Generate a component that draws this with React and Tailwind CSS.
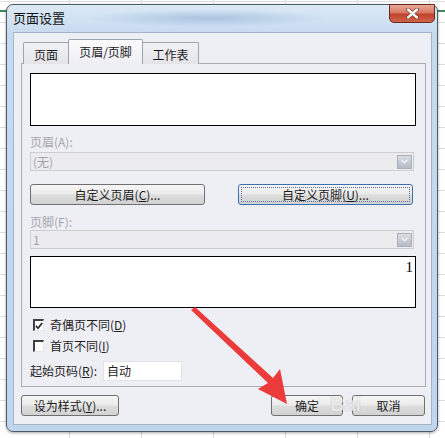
import React from "react";

const cjk = "font-['Microsoft_YaHei','Noto_Sans_CJK_SC',sans-serif]";

function Btn({ children, w, focused }) {
  return (
    <div
      className={`h-[21px] ${w} rounded-[3px] border flex items-center justify-center text-[12px] text-[#1b1b1b] bg-[linear-gradient(to_bottom,#f6f6f6_0%,#ebebeb_48%,#dddddd_52%,#d2d2d2_100%)] ${
        focused ? "border-[#3c6fb0] p-[2px]" : "border-[#707070]"
      }`}
    >
      {focused ? (
        <div className="w-full h-full border border-dotted border-[#5a6f96] flex items-center justify-center">{children}</div>
      ) : (
        children
      )}
    </div>
  );
}

function Combo({ value }) {
  return (
    <div className="h-[19px] w-[384px] border border-[#cdcdd2] bg-[#ececef] flex items-center justify-between pl-[2px] pr-[1px]">
      <span className="text-[12px] text-[#a3a3a8] leading-none">{value}</span>
      <div className="w-[15px] h-[14px] border border-[#a9aeb8] bg-[linear-gradient(to_bottom,#d9dde4,#b5bbc5)] flex items-center justify-center">
        <svg width="7" height="5" viewBox="0 0 7 5">
          <path d="M0.5 0.8 L3.5 3.8 L6.5 0.8" fill="none" stroke="#f4f5f8" strokeWidth="1.4" />
        </svg>
      </div>
    </div>
  );
}

function Check({ checked, children }) {
  return (
    <div className="h-[16px] flex items-center">
      <div className="ml-[3px] w-[11px] h-[12px] bg-white border-t-[2px] border-l-[2px] border-t-[#404040] border-l-[#404040] border-b border-r border-b-[#e6e6e6] border-r-[#e6e6e6] flex items-center justify-center">
        {checked && (
          <svg width="8" height="8" viewBox="0 0 8 8">
            <path d="M0.8 3.8 L3 6.2 L7.2 1" fill="none" stroke="#222" strokeWidth="1.7" />
          </svg>
        )}
      </div>
      <span className="ml-[6px] text-[12px] text-[#1e1e1e]">{children}</span>
    </div>
  );
}

export default function App() {
  return (
    <div
      className={`relative w-[445px] h-[438px] overflow-hidden bg-white ${cjk} bg-[linear-gradient(to_bottom,transparent_10px,#3d8a5c_10px,#3d8a5c_12px,transparent_12px),linear-gradient(to_right,#d9d9d9_1px,transparent_1px),linear-gradient(to_bottom,#dedede_1px,transparent_1px)] bg-[size:100%_100%,72px_21px,72px_21px] bg-[position:0_0,69px_1px,69px_1px] [background-repeat:no-repeat,repeat,repeat]`}
    >
      <div className="pt-[4px] pl-[6px]">
        {/* dialog frame */}
        <div className="w-[432px] h-[428px] rounded-[7px] border border-[#4f5964] bg-[linear-gradient(to_bottom,#dce9f6_0px,#c6daef_30px,#c0d6ee_100%)] flex flex-col shadow-[0_1px_3px_rgba(0,0,0,0.35)]">
          {/* title bar */}
          <div className="h-[27px] flex justify-between items-start rounded-t-[7px] bg-[radial-gradient(ellipse_120px_9px_at_200px_13px,rgba(120,160,200,0.45),transparent)]">
            <span className="pl-[6px] pt-[4px] text-[13px] text-[#111] leading-[18px]">页面设置</span>
            <div className="-mt-px mr-[2px] w-[46px] h-[19px] rounded-b-[5px] border border-[#6a2a22] bg-[linear-gradient(to_bottom,#e9a897_0%,#d67a62_45%,#c2432c_55%,#d0634a_100%)] flex items-center justify-center">
              <svg width="13" height="11" viewBox="0 0 13 11">
                <path d="M2 1.5 L11 9.5 M11 1.5 L2 9.5" stroke="#5a2018" strokeWidth="3.6" strokeLinecap="round" />
                <path d="M2 1.5 L11 9.5 M11 1.5 L2 9.5" stroke="#ffffff" strokeWidth="2.4" strokeLinecap="round" />
              </svg>
            </div>
          </div>

          {/* client area */}
          <div className="ml-[6px] w-[419px] h-[393px] border border-[#a4b4c6] bg-[#eeeef5] flex flex-col">
            {/* tabs */}
            <div className="mt-[7px] ml-[9px] h-[24px] flex items-end -mb-px relative z-10">
              <div className="w-[46px] h-[22px] border border-[#9ea4ad] border-b-0 rounded-t-[2px] bg-[linear-gradient(to_bottom,#f3f3f6,#e3e3e8)] flex items-center justify-center pt-[2px] text-[12px] text-[#1b1b1b]">
                页面
              </div>
              <div className="-ml-px w-[75px] h-[25px] border border-[#9ea4ad] border-b-0 rounded-t-[2px] bg-[linear-gradient(to_bottom,#fbfbfd,#eeeef5)] flex items-start justify-center pt-[3px] text-[12px] text-[#1b1b1b]">
                页眉/页脚
              </div>
              <div className="-ml-px w-[57px] h-[22px] border border-[#9ea4ad] border-b-0 rounded-t-[2px] bg-[linear-gradient(to_bottom,#f3f3f6,#e3e3e8)] flex items-center justify-center pt-[2px] text-[12px] text-[#1b1b1b]">
                工作表
              </div>
            </div>

            {/* tab panel */}
            <div className="ml-[7px] w-[405px] border border-[#a9adb4] bg-[#eeeef5] flex flex-col pl-[8px] pt-[9px] pb-[5px]">
              <div className="h-[53px] w-[386px] border border-black bg-white" />
              <div className="mt-[8px] h-[16px] leading-[16px] text-[12px] text-[#a6a6ab]">页眉(A):</div>
              <div className="mt-[2px]">
                <Combo value="(无)" />
              </div>
              <div className="mt-[13px] flex gap-[33px]">
                <Btn w="w-[175px]">
                  自定义页眉(<u>C</u>)...
                </Btn>
                <Btn w="w-[175px]" focused>
                  自定义页脚(<u>U</u>)...
                </Btn>
              </div>
              <div className="mt-[9px] h-[16px] leading-[16px] text-[12px] text-[#a6a6ab]">页脚(F):</div>
              <Combo value="1" />
              <div className="mt-[7px] h-[52px] w-[386px] border border-black bg-white flex justify-end">
                <span className="pr-[2px] pt-[1px] font-['Liberation_Serif',serif] text-[15px] leading-[18px] text-black">1</span>
              </div>
              <div className="mt-[9px]">
                <Check checked>
                  奇偶页不同(<u>D</u>)
                </Check>
              </div>
              <div className="mt-[5px]">
                <Check>
                  首页不同(<u>I</u>)
                </Check>
              </div>
              <div className="mt-[7px] h-[20px] flex items-center">
                <span className="w-[73px] text-[12px] text-[#1e1e1e]">
                  起始页码(<u>R</u>):
                </span>
                <div className="w-[79px] h-[20px] border border-[#e1e2ea] bg-white flex items-center pl-[3px] text-[12px] text-[#1e1e1e]">
                  自动
                </div>
              </div>
            </div>

            {/* bottom buttons */}
            <div className="mt-[8px] ml-[7px] flex">
              <Btn w="w-[98px]">
                设为样式(<u>Y</u>)...
              </Btn>
              <div className="ml-[152px]">
                <Btn w="w-[72px]">确定</Btn>
              </div>
              <div className="ml-[9px]">
                <Btn w="w-[73px]">取消</Btn>
              </div>
            </div>
          </div>
        </div>
      </div>

      {/* baidu watermark */}
      <div className="absolute left-[330px] top-[393px] pointer-events-none text-white/75 [text-shadow:0_0_1px_rgba(120,120,120,0.6)] font-['Liberation_Sans',sans-serif] font-bold text-[20px] leading-[22px]">
        Bai
      </div>

      {/* red arrow */}
      <svg className="absolute left-0 top-0 pointer-events-none" width="445" height="438" viewBox="0 0 445 438">
        <polygon
          points="191,310 195,307 273,378 280,369 287,404 258,389 268,383"
          fill="#ec3b3b"
        />
      </svg>
    </div>
  );
}
